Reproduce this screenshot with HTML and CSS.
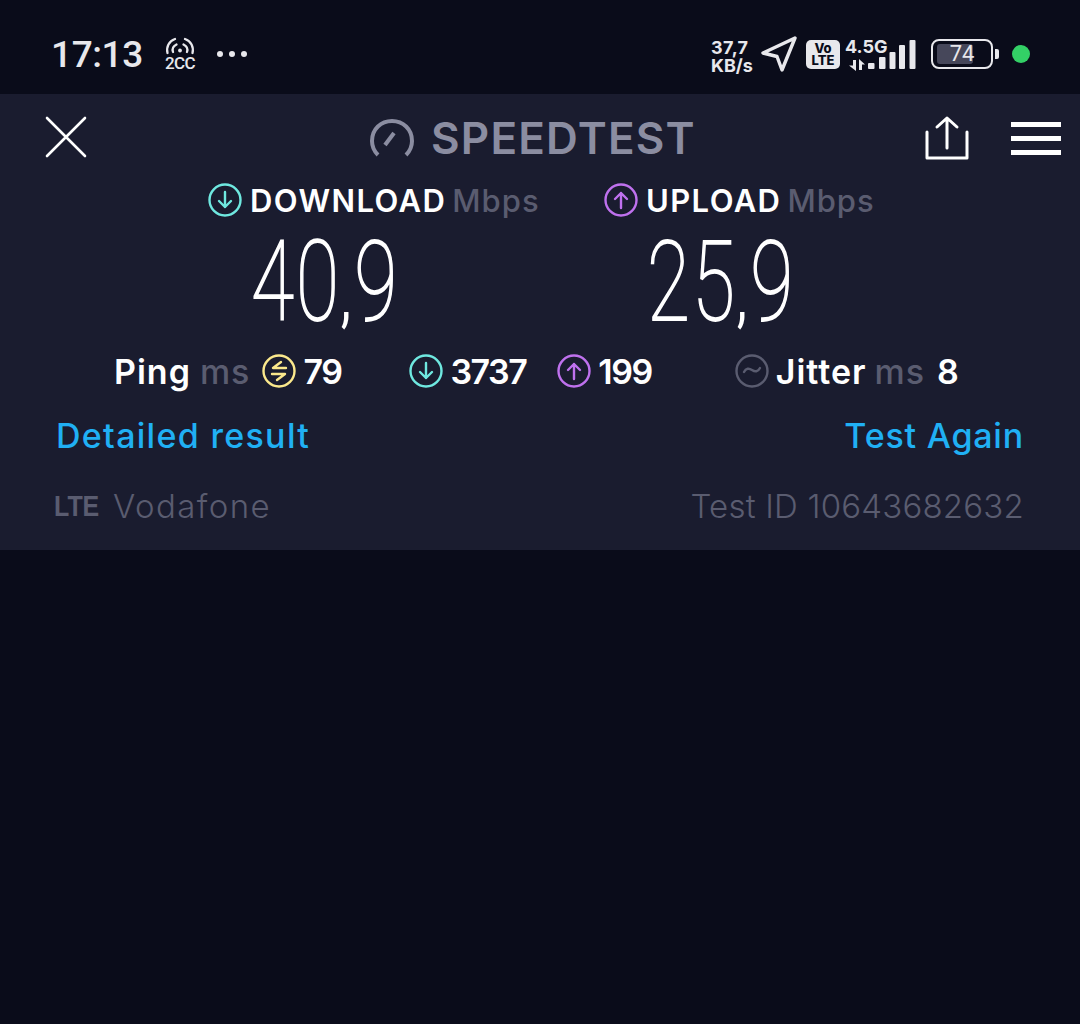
FILE: index.html
```html
<!DOCTYPE html>
<html lang="en">
<head>
<meta charset="utf-8">
<title>Speedtest result</title>
<link rel="stylesheet" href="styles.css">
</head>
<body>
<div class="status">
  <div class="status-left">
    <span class="clock">17:13</span>
    <div class="hotspot">
      <svg width="30" height="18" viewBox="0 0 30 18" fill="none" stroke="#e8e8ec" stroke-width="2.300" stroke-linecap="round"><path d="M2.500 16C1 10 4 4 10 2M20 2c6 2 9 8 7.500 14"/><path d="M8 15c-1-3 .5-6 3.500-7.500M18.500 7.500c3 1.500 4.500 4.500 3.500 7.500"/><circle cx="15" cy="13.500" r="1.900" fill="#e8e8ec" stroke="none"/></svg>
      <span class="hotspot-label">2CC</span>
    </div>
    <div class="dots"><i></i><i></i><i></i></div>
  </div>
  <div class="status-right">
    <div class="speed"><span>37,7</span><span>KB/s</span></div>
    <svg class="nav" width="38" height="38" viewBox="0 0 38 38" fill="none" stroke="#e8e8ec" stroke-width="3.400" stroke-linejoin="round"><path d="M35 3 3 18l14 3.500L22 35z"/></svg>
    <div class="volte"><span>Vo</span><span>LTE</span></div>
    <div class="signal">
      <span class="gen">4.5G</span>
      <svg width="20" height="12" viewBox="0 0 20 12" fill="#e8e8ec"><path d="M8 1v11L1 6.500h4V1zM11 0l6 5.500h-3V11h-3z"/></svg>
    </div>
    <svg class="bars" width="48" height="32" viewBox="0 0 48 32" fill="#e8e8ec"><rect x="0" y="25" width="6.500" height="6" rx="1"/><rect x="11" y="19" width="6.500" height="12" rx="1"/><rect x="21.500" y="14" width="6" height="17" rx="1"/><rect x="31" y="7" width="6" height="24" rx="1"/><rect x="41.500" y="2" width="6" height="29" rx="1"/></svg>
    <div class="battery"><div class="battery-body"><div class="battery-fill"></div><span class="battery-text">74</span></div><i class="battery-tip"></i></div>
    <i class="green"></i>
  </div>
</div>

<main class="panel">
  <header class="top">
    <svg class="close" width="44" height="44" viewBox="0 0 44 44" stroke="#fff" stroke-width="2.600" stroke-linecap="round"><path d="M3 3l38 38M41 3 3 41"/></svg>
    <div class="brand">
      <svg width="46" height="40" viewBox="0 0 46 40" fill="none" stroke="#8b8da1" stroke-width="4"><path d="M9 37C5 33 3 28 3 23 3 11 12 3 23 3s20 8 20 20c0 5-2 10-6 14"/><path d="M16 27l9-12" stroke-width="4"/></svg>
      <span>SPEEDTEST</span>
    </div>
    <div class="top-actions">
      <svg width="46" height="46" viewBox="0 0 46 46" fill="none" stroke="#fff" stroke-width="3" stroke-linecap="round" stroke-linejoin="round"><path d="M23 33V3M13 12l10-9 10 9"/><path d="M3 17v26h40V17"/></svg>
      <div class="menu"><i></i><i></i><i></i></div>
    </div>
  </header>

  <section class="speeds">
    <div class="speed-col">
      <div class="speed-head">
        <svg class="ic" width="34" height="34" viewBox="0 0 34 34" fill="none" stroke="#6fe8e0" stroke-width="2.400"><circle cx="17" cy="17" r="15.500"/><path d="M17 9v15M11 18l6 6 6-6" stroke-linecap="round" stroke-linejoin="round"/></svg>
        <b>DOWNLOAD</b><span class="unit">Mbps</span>
      </div>
      <div class="value"><span>40<small>,</small>9</span></div>
    </div>
    <div class="speed-col">
      <div class="speed-head">
        <svg class="ic" width="34" height="34" viewBox="0 0 34 34" fill="none" stroke="#bf71ee" stroke-width="2.400"><circle cx="17" cy="17" r="15.500"/><path d="M17 25V10M11 16l6-6 6 6" stroke-linecap="round" stroke-linejoin="round"/></svg>
        <b>UPLOAD</b><span class="unit">Mbps</span>
      </div>
      <div class="value"><span>25<small>,</small>9</span></div>
    </div>
  </section>

  <section class="stats">
    <div class="stat stat-ping"><b>Ping</b><span class="unit">ms</span>
      <svg class="ic" width="34" height="34" viewBox="0 0 34 34" fill="none" stroke="#fbe88c" stroke-width="2.400" stroke-linecap="round" stroke-linejoin="round"><circle cx="17" cy="17" r="15.500"/><path d="M19 8l-8 6h13M10 20h13l-8 6"/></svg>
      <b class="num">79</b></div>
    <div class="stat stat-dl">
      <svg class="ic" width="34" height="34" viewBox="0 0 34 34" fill="none" stroke="#6fe8e0" stroke-width="2.400"><circle cx="17" cy="17" r="15.500"/><path d="M17 9v15M11 18l6 6 6-6" stroke-linecap="round" stroke-linejoin="round"/></svg>
      <b class="num">3737</b></div>
    <div class="stat stat-ul">
      <svg class="ic" width="34" height="34" viewBox="0 0 34 34" fill="none" stroke="#bf71ee" stroke-width="2.400"><circle cx="17" cy="17" r="15.500"/><path d="M17 25V10M11 16l6-6 6 6" stroke-linecap="round" stroke-linejoin="round"/></svg>
      <b class="num">199</b></div>
    <div class="stat stat-jit">
      <svg class="ic" width="34" height="34" viewBox="0 0 34 34" fill="none" stroke="#5a5c70" stroke-width="2.400" stroke-linecap="round"><circle cx="17" cy="17" r="15.500"/><path d="M9 18c2-4 5-4 8-2s6 2 8-2"/></svg>
      <b>Jitter</b><span class="unit">ms</span><b class="num">8</b></div>
  </section>

  <nav class="links"><span class="link-wide">Detailed result</span><span class="link-narrow">Test Again</span></nav>

  <footer class="foot">
    <div class="carrier"><span class="lte">LTE</span><span class="operator">Vodafone</span></div>
    <span class="test-id">Test ID 10643682632</span>
  </footer>
</main>
</body>
</html>
```
FILE: styles.css
```css
* { box-sizing: border-box; }
html, body { margin: 0; height: 1024px; overflow: hidden; }
body { background: #0a0c1a; font-family: Inter, "Liberation Sans", sans-serif; color: #fff; }
i { display: block; }

.status { height: 94px; display: flex; justify-content: space-between; align-items: center; padding: 22px 50px 8px 51px; color: #e8e8ec; }
.status-left { display: flex; align-items: center; }
.clock { font-family: Roboto, sans-serif; font-size: 37px; font-weight: 500; width: 114px; letter-spacing: -.4px; }
.hotspot { display: flex; flex-direction: column; align-items: center; width: 30px; }
.hotspot-label { font-family: Roboto, sans-serif; font-size: 17px; font-weight: 500; line-height: 16px; letter-spacing: -.6px; }
.dots { display: flex; gap: 6px; margin-left: 22px; }
.dots i { width: 6px; height: 6px; border-radius: 50%; background: #e8e8ec; }

.status-right { display: flex; align-items: center; }
.speed { display: flex; flex-direction: column; font-family: Inter, sans-serif; font-weight: 700; font-size: 18px; line-height: 18px; width: 42px; margin-top: 6px; }
.speed span:first-child { letter-spacing: .4px; }
.nav { margin-left: 7px; }
.volte { margin-left: 8px; width: 34px; height: 29px; background: #e8e8ec; border-radius: 5px; color: #0a0c1a; font-size: 13px; font-weight: 800; line-height: 12px; display: flex; flex-direction: column; align-items: center; justify-content: center; }
.signal { display: flex; flex-direction: column; width: 44px; margin-left: 4px; align-items: flex-start; }
.gen { font-size: 18px; font-weight: 700; line-height: 18px; margin-left: 1px; }
.signal svg { margin: 3px 0 0 4px; }
.bars { margin-left: -20px; }
.battery { display: flex; align-items: center; margin-left: 15px; gap: 2px; }
.battery-body { width: 62px; height: 30px; border: 2.500px solid #e8e8ec; border-radius: 8px; padding: 3px 4px; position: relative; }
.battery-fill { width: 36px; height: 100%; background: #46475a; border-radius: 3px; }
.battery-text { position: absolute; inset: 0; text-align: center; font-family: Roboto, sans-serif; font-size: 22px; line-height: 25px; }
.battery-tip { width: 4px; height: 10px; background: #e8e8ec; border-radius: 0 2px 2px 0; }
.green { width: 18px; height: 18px; border-radius: 50%; background: #33d066; margin-left: 13px; }

.panel { height: 456px; background: #1a1c2f; display: flex; flex-direction: column; padding: 0 56px 0 45px; }
.top { height: 86px; display: flex; align-items: center; justify-content: space-between; position: relative; margin-right: -37px; }
.close { margin-left: -1px; }
.brand { position: absolute; left: 324px; top: 22px; display: flex; align-items: center; gap: 16px; color: #8b8da1; font-size: 44px; font-weight: 600; line-height: 44px; letter-spacing: 1.200px; }
.top-actions { display: flex; align-items: center; gap: 41px; margin-top: 2px; }
.menu { display: flex; flex-direction: column; gap: 9px; width: 50px; }
.menu i { height: 5px; background: #fff; }

.speeds { display: flex; padding-left: 163px; }
.speed-col { width: 396px; }
.speed-head { display: flex; align-items: center; height: 40px; font-size: 31px; letter-spacing: 1.400px; }
.speed-head b { font-weight: 600; margin-left: 8px; }
.unit { color: #5a5c70; font-weight: 500; }
.speed-head .unit { margin-left: 6px; letter-spacing: 1px; }
.value { height: 123px; margin-left: 43px; font-family: Roboto, sans-serif; font-weight: 100; font-size: 112px; line-height: 123px; }
.value span { display: inline-block; transform: scaleX(.7); transform-origin: left center; letter-spacing: 3px; white-space: nowrap; -webkit-text-stroke: 1.800px #fff; }
.value small { font-size: 70px; font-weight: 400; -webkit-text-stroke: 0; letter-spacing: 5px; }

.stats { display: flex; align-items: center; height: 56px; padding-left: 69px; font-size: 34px; letter-spacing: 1px; }
.stat { display: flex; align-items: center; }
.stat b { font-weight: 600; }
.stat .num { letter-spacing: -1.500px; }
.stat .ic { margin: 0 7px 0 0; flex: none; }
.stat-ping .unit { margin: 0 12px 0 9px; }
.stat-dl { margin-left: 68px; }
.stat-ul { margin-left: 31px; }
.stat-jit { margin-left: 83px; }
.stat-jit .unit { margin: 0 12px 0 8px; }
.links { display: flex; justify-content: space-between; padding: 0 0 0 11px; height: 72px; align-items: center; font-size: 34px; font-weight: 500; color: #20b0f4; }
.link-wide { letter-spacing: 1.300px; }
.link-narrow { letter-spacing: .8px; }
.foot { display: flex; justify-content: space-between; align-items: center; padding: 0 0 0 9px; height: 70px; font-size: 33px; font-weight: 300; color: #5a5c70; }
.carrier { display: flex; align-items: center; gap: 13px; }
.operator { letter-spacing: 1.400px; }
.test-id { letter-spacing: .2px; }
.lte { font-family: "Liberation Sans", sans-serif; font-weight: 700; font-size: 29px; transform: scaleX(.86); transform-origin: left center; width: 46px; }
```
